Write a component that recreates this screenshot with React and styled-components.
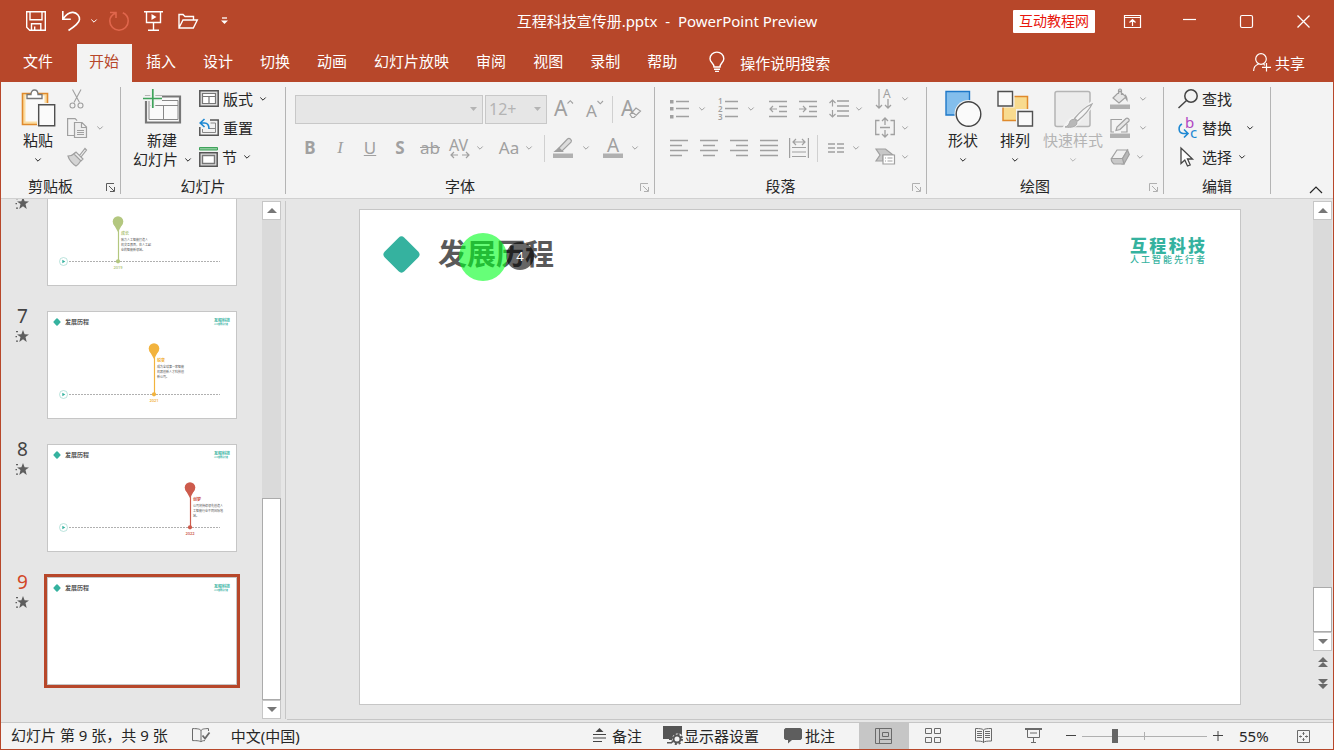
import React from 'react';
import styled, { createGlobalStyle, css } from 'styled-components';

const red = '#b7472a';
const ribbonBg = '#f3f3f3';
const line = '#c6c6c6';
const ink = '#262626';
const muted = '#a0a0a0';
const teal = '#35b29f';

const GlobalStyle = createGlobalStyle`
    * {
        box-sizing: border-box;
    }
    body {
        margin: 0;
        font-family: 'Noto Sans', 'Noto Sans CJK SC', sans-serif;
        font-size: 15px;
        color: ${ink};
    }
    button, select, input {
        font: inherit;
        color: inherit;
        margin: 0;
        padding: 0;
        border: 0;
        border-radius: 0;
        background: none;
    }
    svg {
        display: block;
        flex: none;
        overflow: visible;
    }
`;

/* ---------- layout ---------- */

const Window = styled.div`
    display: flex;
    flex-direction: column;
    height: 100vh;
    border: solid ${red};
    border-width: 0 1px 1px;
    background: #e6e6e6;
    overflow: hidden;
`;

const TitleBar = styled.header`
    display: grid;
    grid-template-columns: 1fr auto 1fr;
    align-items: center;
    height: 42px;
    background: ${red};
    color: #fff;
`;

const QuickAccess = styled.div`
    display: flex;
    align-items: center;
    padding-left: 25px;
`;

const QuickButton = styled.button`
    display: flex;
    align-items: center;
    gap: 10px;
    height: 24px;
    margin-right: ${p => p.$after}px;
    color: ${p => (p.disabled ? '#e0664c' : '#fff')};
`;

const DocTitle = styled.h1`
    margin: 0;
    padding-bottom: 2px;
    font-size: 15px;
    font-weight: 400;
    white-space: pre;
`;

const WindowControls = styled.div`
    display: flex;
    justify-content: flex-end;
    align-items: center;
    padding-right: 1px;
`;

const SiteBadge = styled.a`
    margin-right: 9px;
    padding: 0 6px 1px;
    border-radius: 1px;
    background: #fff;
    color: #e8160c;
    font-size: 14px;
    line-height: 22px;
    text-decoration: none;
`;

const ControlButton = styled.button`
    display: flex;
    justify-content: center;
    align-items: center;
    width: 57px;
    height: 40px;
`;

const TabBar = styled.nav`
    display: flex;
    gap: 2px;
    height: 40px;
    padding-top: 2px;
    background: ${red};
    color: #fff;
`;

const Tab = styled.button`
    padding: 0 13px 3px 12px;
    line-height: 35px;
    white-space: nowrap;
    ${p => p.$file && css`
        padding: 0 22px 3px;
    `}
    ${p => p.$active && css`
        background: ${ribbonBg};
        color: ${red};
    `}
`;

const TellMe = styled.button`
    display: flex;
    align-items: center;
    gap: 15px;
    margin-left: 17px;
    padding-bottom: 2px;
`;

const Share = styled(TellMe)`
    gap: 4px;
    margin-left: auto;
    padding-right: 28px;
`;

const Ribbon = styled.section`
    display: flex;
    flex: none;
    height: 117px;
    padding-top: 5px;
    border-bottom: 1px solid #d0d0d0;
    background: ${ribbonBg};
`;

const GroupBox = styled.div`
    display: flex;
    flex-direction: column;
    width: ${p => p.$width}px;
    height: 107px;
    border-right: 1px solid #b4b4b4;
`;

const GroupBody = styled.div`
    display: flex;
    flex: 1;
    padding-left: ${p => p.$left}px;
`;

const GroupFooter = styled.div`
    display: flex;
    align-items: center;
    height: 18px;
    margin-bottom: -1px;
`;

const GroupLabel = styled.span`
    flex: 1;
    text-align: center;
    line-height: 18px;
`;

const Launcher = styled.button`
    display: flex;
    width: 20px;
    padding: 2px 0 0 6px;
    color: ${p => (p.disabled ? '#b0b0b0' : '#5a5a5a')};
`;

const Collapse = styled.button`
    margin: auto 10px 4px auto;
`;

const BigButton = styled.button`
    display: flex;
    flex-direction: column;
    align-items: center;
    width: ${p => p.$width}px;
    height: 84px;
    padding-top: 2px;
    line-height: 19px;
    white-space: nowrap;
    color: ${p => (p.disabled ? '#b4b4b4' : ink)};
`;

const BigIcon = styled.span`
    height: 40px;
    margin-bottom: 2px;
`;

const BigLine = styled.span`
    display: flex;
    justify-content: center;
    align-items: center;
    gap: 7px;
    height: 19px;
`;

const Stack = styled.div`
    display: flex;
    flex-direction: column;
    gap: 4px;
    margin-top: -1px;
    padding-left: ${p => p.$left || 0}px;
`;

const SmallButton = styled.button`
    display: flex;
    align-items: center;
    height: 25px;
    color: ${p => (p.disabled ? muted : ink)};
`;

const SmallText = styled.span`
    margin: 0 ${p => p.$after || 7}px 0 4px;
`;

const ToolRows = styled.div`
    display: flex;
    flex-direction: column;
    gap: 9px;
    padding-top: 7px;
`;

const ToolRow = styled.div`
    display: flex;
    align-items: center;
    height: 30px;
`;

const ToolButton = styled.button`
    display: flex;
    align-items: center;
    height: 30px;
    margin-left: ${p => p.$left || 0}px;
    padding-bottom: 1px;
    color: ${muted};
`;

const ToolFace = styled.span`
    display: flex;
    justify-content: center;
    width: 30px;
    margin-right: ${p => p.$after || 0}px;
    font-size: 17px;
    line-height: 28px;
`;

const ToolDivider = styled.span`
    width: 1px;
    height: 27px;
    margin: 0 ${p => p.$after || 3}px 0 ${p => p.$before || 3}px;
    background: #d0d0d0;
`;

const SelectBox = styled.label`
    display: flex;
    align-items: center;
    position: relative;
    width: ${p => p.$width}px;
    height: 29px;
    margin-right: 2px;
    border: 1px solid #c8c8c8;
    background: #e6e6e6;
    color: #b4b4b4;

    select {
        width: 100%;
        height: 100%;
        padding-left: 3px;
        appearance: none;
        opacity: 1;
        font-size: 16px;
    }
    svg {
        position: absolute;
        right: 5px;
        pointer-events: none;
    }
`;

const Workspace = styled.main`
    display: flex;
    flex: 1;
    min-height: 0;
`;

const ThumbPane = styled.div`
    display: flex;
    flex-direction: column;
    justify-content: flex-end;
    gap: 25px;
    width: 261px;
    padding: 0 25px 37px 0;
    overflow: hidden;
`;

const ThumbRow = styled.div`
    display: flex;
    flex: none;
`;

const ThumbIndex = styled.div`
    display: flex;
    flex-direction: column;
    align-items: center;
    gap: 1px;
    width: 46px;
    padding-right: 3px;
    margin-top: -8px;
    font-size: 19px;
    line-height: 26px;
    color: ${p => (p.$active ? '#d24726' : '#444')};
`;

const Thumb = styled.button`
    position: relative;
    flex: 1;
    height: 108px;
    border: 1px solid ${line};
    background: #fff;
    text-align: left;
    ${p => p.$active && css`
        outline: 3px solid ${red};
    `}

    > svg {
        position: absolute;
        inset: 0;
    }
`;

const ThumbHead = styled.span`
    display: flex;
    align-items: center;
    position: absolute;
    inset: 4px 6px auto 5px;
    height: 12px;
    font-size: 6px;
    font-weight: 700;
    color: #555;
`;

const ThumbTitle = styled.span`
    margin-left: 4px;
    font-size: 6px;
    line-height: 12px;
`;

const ThumbLogo = styled.span`
    display: flex;
    flex-direction: column;
    width: 16px;
    margin-left: auto;
    font-size: 4px;
    line-height: 5px;
    color: ${teal};

    small {
        font-size: 2px;
        line-height: 4px;
    }
`;

const ScrollBar = styled.div`
    display: flex;
    flex-direction: column;
    flex: 1;
    width: 19px;
    background: #dadada;
`;

const ScrollColumn = styled.div`
    display: flex;
    flex-direction: column;
    padding: ${p => p.$pad};
`;

const ScrollButton = styled.button`
    display: flex;
    justify-content: center;
    align-items: center;
    height: 19px;
    border: 1px solid ${line};
    background: #fff;
    color: #777;
`;

const ScrollThumb = styled.div`
    height: ${p => p.$size}%;
    margin-top: auto;
    border: 1px solid #ababab;
    background: #fff;
`;

const SlideJump = styled.button`
    display: flex;
    justify-content: center;
    height: 22px;
    padding-top: 6px;
    color: #6a6a6a;
`;

const PaneDivider = styled.div`
    width: 1px;
    margin: 2px 1px 3px 4px;
    background: ${line};
`;

const Stage = styled.div`
    flex: 1;
    display: flex;
    flex-direction: column;
    min-width: 0;
    margin-bottom: 2px;
    border-bottom: 1px solid ${line};
`;

const StageInner = styled.div`
    display: flex;
    flex: 1;
    min-height: 0;
`;

const SlideArea = styled.div`
    flex: 1;
    padding: 10px 72px;
`;

const Slide = styled.article`
    display: flex;
    justify-content: space-between;
    align-items: flex-start;
    width: 100%;
    aspect-ratio: 16 / 9;
    padding: 24px 35px 0 22px;
    border: 1px solid ${line};
    background: #fff;
`;

const SlideHeading = styled.div`
    display: flex;
    align-items: center;
    gap: 17px;
    position: relative;
`;

const SlideTitle = styled.h2`
    margin: 0;
    font-size: 29px;
    font-weight: 700;
    line-height: 40px;
    color: #595959;
`;

const Pointer = styled.span`
    position: absolute;
    top: -1px;
    left: 77px;
    width: 48px;
    height: 48px;
    border-radius: 50%;
    background: rgba(0, 255, 30, 0.6);
`;

const StepBadge = styled.span`
    position: absolute;
    top: 8px;
    left: 124px;
    width: 28px;
    height: 28px;
    border-radius: 50%;
    background: rgba(0, 0, 0, 0.6);
    color: #fff;
    font-size: 13px;
    line-height: 28px;
    text-align: center;
`;

const Brand = styled.div`
    width: 75px;
    margin-top: 3px;
    color: ${teal};
    font-size: 17px;
    font-weight: 900;
    line-height: 18px;
    text-align: justify;
    text-align-last: justify;
`;

const Tagline = styled.div`
    font-size: 9px;
    font-weight: 500;
    line-height: 10px;
`;

const StatusBar = styled.footer`
    display: flex;
    align-items: stretch;
    flex: none;
    height: 27px;
    border-top: 1px solid ${line};
    background: ${ribbonBg};
`;

const StatusText = styled.span`
    padding-left: 10px;
    line-height: 25px;
    white-space: nowrap;
`;

const StatusButton = styled.button`
    display: flex;
    align-items: center;
    gap: ${p => p.$gap || 0}px;
    margin-left: ${p => p.$left || 0}px;
    padding-bottom: 2px;
    white-space: nowrap;
`;

const StatusRight = styled.div`
    display: flex;
    align-items: stretch;
    margin-left: auto;
    padding-right: 23px;
`;

const ViewButtons = styled.div`
    display: flex;
    margin-left: 24px;
`;

const ViewButton = styled.button`
    display: flex;
    justify-content: center;
    align-items: center;
    width: 50px;
    color: #6a6a6a;
    background: ${p => (p.$active ? line : 'none')};
`;

const ZoomRange = styled.input`
    align-self: center;
    width: 125px;
    height: 16px;
    margin: 0 6px;
    appearance: none;
    background:
        linear-gradient(#b0b0b0, #b0b0b0) 50% 50% / 100% 1px no-repeat,
        linear-gradient(#b0b0b0, #b0b0b0) 50% 50% / 1px 8px no-repeat;

    &::-webkit-slider-thumb {
        appearance: none;
        width: 6px;
        height: 14px;
        background: #666;
    }
`;

const ZoomValue = styled.button`
    width: 60px;
    padding: 0 0 1px 16px;
    text-align: left;
`;

const PlainButton = styled.button`
    display: flex;
    align-items: center;
    margin-left: ${p => p.$left || 0}px;
`;

/* ---------- icons ---------- */

const Svg = ({ w = 20, h = 20, sw = 1, children, ...rest }) => (
    <svg
        width={w}
        height={h}
        viewBox={`0 0 ${w} ${h}`}
        fill="none"
        stroke="currentColor"
        strokeWidth={sw}
        aria-hidden="true"
        {...rest}
    >
        {children}
    </svg>
);

const Chevron = props => (
    <Svg w={6} h={4} sw={1} {...props}><path d="M.3 .5 3 3.2 5.7 .5" /></Svg>
);

const Triangle = ({ up }) => (
    <Svg w={10} h={5} stroke="none" fill="currentColor">
        <path d={up ? 'M5 0 10 5H0z' : 'M0 0h10L5 5z'} />
    </Svg>
);

const LauncherIcon = () => (
    <Svg w={9} h={9}>
        <path d="M.5 8V.5H8M3 3l5 5M8.5 4v4.5H4" />
    </Svg>
);

const SaveIcon = () => (
    <Svg sw={1.4}>
        <path d="M.7 .7h18.6v18.6H3.7l-3-3zM4 .7v8h12v-8M5.5 19v-6.3h9.3V19M8.7 19v-3.5" />
    </Svg>
);

const UndoIcon = () => (
    <Svg sw={1.6}>
        <path d="M1.8 0v8.3h8M2 8C5.500 3 8.500 1 12 1.400c4 .5 6.700 3.500 6.500 7.100C18.300 12 14 15 7.500 19.500" />
    </Svg>
);

const RedoIcon = () => (
    <Svg sw={1.6}>
        <path d="M1 1.500h6V7M7 2C3 3.500 .8 6.500 .8 10a9.200 9.200 0 0 0 18.400 0c0-3.600-2-6.600-5.400-8.200" />
    </Svg>
);

const PresentIcon = () => (
    <Svg w={19} sw={1.4}>
        <path d="M0 .7h19M2.500 1v10.500h14V1M9.500 12v7M4 19.200h11" />
        <path d="M7.500 3v6l5-3z" fill="currentColor" stroke="none" />
    </Svg>
);

const FolderIcon = () => (
    <Svg h={16} sw={1.4}>
        <path d="M1 14.500V1.500h4l2 2h8.500v3.300M1 14.800 5 7h14.300l-4 8H1z" />
    </Svg>
);

const CustomizeIcon = () => (
    <Svg w={7} h={8} sw={1.300}>
        <path d="M1 1h5" />
        <path d="M0 3.500h7L3.500 7z" fill="currentColor" stroke="none" />
    </Svg>
);

const DisplayIcon = () => (
    <Svg w={17} h={13} sw={1.200}>
        <path d="M.5 .5h16v12H.5zM.5 2.500h16M8.500 11V5M5.500 7.500l3-3 3 3" />
    </Svg>
);

const BulbIcon = () => (
    <Svg w={16} sw={1.4}>
        <path d="M5 15c0-4-4-4.500-4-8.300a6.800 6.500 0 0 1 13.800 0C14.800 10.500 11 11 11 15zM5 17.300h6M6 19.400h4" />
    </Svg>
);

const ShareIcon = () => (
    <Svg w={18} h={19} sw={1.200}>
        <circle cx="8" cy="6" r="5.300" />
        <path d="M.6 18c0-4 2-6 5-7M10.500 11.200l1.500 1M13.500 10v8.500M9 14.300h9" />
    </Svg>
);

const PasteIcon = () => (
    <Svg w={34} h={38}>
        <path d="M1.500 4.500h25v31h-25z" fill="#fbdca0" stroke="#e08a2c" strokeWidth="1.600" />
        <path d="M4.500 6.500h19v26h-19z" fill="#fafafa" stroke="none" />
        <path d="M6 9.500v-4h4c0-3 1.500-4.500 3.500-4.500S17 2.500 17 5.500h4v4z" fill="#fff" stroke="#777" strokeWidth="1.300" />
        <path d="M16 14h17v22H16z" fill={ribbonBg} stroke="none" />
        <path d="M17.700 15.700h16v21h-16z" fill="#fafafa" stroke="#505050" strokeWidth="1.400" />
    </Svg>
);

const CutIcon = () => (
    <Svg w={20} sw={1.100}>
        <path d="M5.500 .5 12.500 13.500M14 .5 7 13.500" />
        <circle cx="5.500" cy="16.500" r="2.500" />
        <circle cx="13.500" cy="16.500" r="2.500" />
    </Svg>
);

const CopyIcon = () => (
    <Svg sw={1.200}>
        <path d="M7 17.500H.6V.6h7.500l2 2" />
        <path d="M7.500 4.500h7.500l4.500 4.500v10.500h-12zM14.500 4.500v5h5M10 12.500h7M10 14.500h7M10 16.500h7" fill="#eee" />
    </Svg>
);

const PainterIcon = () => (
    <Svg sw={1.200}>
        <path d="M1 9c3 0 5-1 7-3l6.500 6.500C13 15 11 18 9 19 6 17.500 2 13 1 9z" fill="#d4d4d4" />
        <path d="M7 7l7 7 2-2-7-7zM12.500 8.500 18 1.500l1.500 1.500-5.500 7" fill="#eee" />
    </Svg>
);

const NewSlideIcon = () => (
    <Svg w={38} h={35}>
        <path d="M3 7.500h34v26H3z" fill="#fafafa" stroke="#777" strokeWidth="2.200" />
        <path d="M7 16.500h28M20.500 16.500V31M6 11.500h29v19H6z" stroke="#888" />
        <path d="M9.800 0v18.500M0 9.500h19" stroke={ribbonBg} strokeWidth="5" />
        <path d="M9.800 0v19M0 9.500h19" stroke="#3fa35b" strokeWidth="1.700" />
    </Svg>
);

const LayoutIcon = () => (
    <Svg h={17}>
        <path d="M.8 .8h18.400v15.400H.8z" fill="#dcdcdc" stroke="#555" strokeWidth="1.500" />
        <path d="M3.500 3.500h13v10h-13zM3.500 6.500h13M10 6.500v7" fill="#fff" stroke="#777" strokeWidth="1.200" />
    </Svg>
);

const ResetIcon = () => (
    <Svg h={17}>
        <path d="M.8 8v8.200h18.400V1H11" stroke="#555" strokeWidth="1.500" />
        <path d="M3.500 10v3.500h13V4h-5M10 9.500h6" stroke="#888" />
        <path d="M5.500 0 1.200 4l4.300 4M1.500 4h4c3.500 0 4.500 2 4.500 6" stroke="#1e88d2" strokeWidth="1.600" />
    </Svg>
);

const SectionIcon = () => (
    <Svg w={19}>
        <path d="M.5 .5h18v2.500H.5z" fill="#8ccb9b" stroke="#3fa35b" />
        <path d="M.8 5.800h17.400v13.400H.8z" fill="#ddd" stroke="#555" strokeWidth="1.500" />
        <path d="M3.500 8.500h12v8h-12z" fill="#fff" stroke="#777" strokeWidth="1.400" />
    </Svg>
);

const GrowFontIcon = ({ small }) => (
    <Svg w={20} sw={1.100}>
        <text x="0" y={small ? 18 : 17} fontSize={small ? 17 : 21} fill="currentColor" stroke="none">A</text>
        <path d={small ? 'M11.500 2l2.800 2.800L17 2' : 'M13.500 4.500l2.800-2.800L19 4.500'} />
    </Svg>
);

const ClearFormatIcon = () => (
    <Svg sw={1.200}>
        <text x="0" y="17" fontSize="21" fill="currentColor" stroke="none">A</text>
        <path d="M9 15.500 15 9l4.500 3-6.500 6.500h-2zM11 13l4.500 3.500" fill={ribbonBg} />
    </Svg>
);

const SpacingIcon = () => (
    <Svg w={20} sw={1.200}>
        <text x="-1" y="13" fontSize="16" fill="currentColor" stroke="none">AV</text>
        <path d="M1 17h7M4 14l-3 3 3 3M12 17h7M16 14l3 3-3 3" />
    </Svg>
);

const HighlightIcon = () => (
    <Svg sw={1.200}>
        <path d="M5 11 14.500 1c2-1.500 5 1 3.500 3.200L9 13H5z" fill="#ddd" />
        <path d="M2 13.500 6 10l3.500 3.500z" fill="currentColor" />
        <path d="M0 15.500h20v4.500H0z" fill="#b0b0b0" stroke="none" />
    </Svg>
);

const FontColorIcon = () => (
    <Svg>
        <text x="4" y="14" fontSize="19" fill="currentColor" stroke="none">A</text>
        <path d="M0 15.500h20v4.500H0z" fill="#b0b0b0" stroke="none" />
    </Svg>
);

const BulletsIcon = () => (
    <Svg w={19} sw={1.600}>
        <path d="M6 2.500h13M6 9.500h13M6 17.500h13" />
        <path d="M0 1h3.500v3.500H0zM0 8h3.500v3.500H0zM0 16h3.500v3.500H0z" fill="currentColor" stroke="none" />
    </Svg>
);

const NumberingIcon = () => (
    <Svg w={20} sw={1.600}>
        <path d="M7 2.500h13M7 9.500h13M7 17.500h13" />
        <g fill="currentColor" stroke="none" fontSize="8" fontWeight="600">
            <text x="0" y="5">1</text>
            <text x="0" y="13">2</text>
            <text x="0" y="21">3</text>
        </g>
    </Svg>
);

const IndentIcon = ({ out }) => (
    <Svg w={18} h={18} sw={1.600}>
        <path d="M0 1.500h18M10 6.500h8M10 11.500h8M0 16.500h18" />
        <path d={out ? 'M1 9h7M4 6 1 9l3 3' : 'M0 9h7M4 6l3 3-3 3'} strokeWidth="1.200" />
    </Svg>
);

const LineSpacingIcon = () => (
    <Svg w={20} h={19} sw={1.600}>
        <path d="M8 2h12M8 7h12M8 12h12M8 17h12" />
        <path d="M3.500 1v6.500M3.500 11v7M.5 4l3-3 3 3M.5 15l3 3 3-3" strokeWidth="1.200" />
    </Svg>
);

const alignPaths = {
    left: 'M0 1.500h18M0 6.500h12M0 11.500h18M0 16.500h12',
    center: 'M0 1.500h18M3 6.500h12M0 11.500h18M3 16.500h12',
    right: 'M0 1.500h18M6 6.500h12M0 11.500h18M6 16.500h12',
    justify: 'M0 1.500h18M0 6.500h18M0 11.500h18M0 16.500h18',
};

const AlignIcon = ({ kind }) => (
    <Svg w={18} h={18} sw={1.500}><path d={alignPaths[kind]} /></Svg>
);

const DistributeIcon = () => (
    <Svg w={20} h={20} sw={1.200}>
        <path d="M.6 0v20M19.400 0v20M4 4h12M7 1 4 4l3 3M13 1l3 3-3 3M3 9.500h14M3 14h14M3 18.500h14" />
    </Svg>
);

const ColumnsIcon = () => (
    <Svg w={16} h={10} sw={1.300}>
        <path d="M0 1h7M0 5h7M0 9h7M9 1h7M9 5h7M9 9h7" />
    </Svg>
);

const TextDirectionIcon = () => (
    <Svg sw={1.300}>
        <path d="M4 0v19M1 16l3 3 3-3M13 10v9M10 16l3 3 3-3" />
        <text x="8" y="9" fontSize="12" fill="currentColor" stroke="none">A</text>
    </Svg>
);

const AlignTextIcon = () => (
    <Svg sw={1.300}>
        <path d="M4.500 2.500H.7v14h3.800M15.500 2.500h3.800v14h-3.800M5 9.500h10M10 0v7M7 3l3-3 3 3M10 12v7M7 16l3 3 3-3" />
    </Svg>
);

const SmartArtIcon = () => (
    <Svg h={17} sw={1.200}>
        <path d="M1 1h9.500L18 7H8v6H1l4-6z" fill="#c8c8c8" />
        <path d="M8 7h11.500v9H8z" fill="#fff" />
        <path d="M10 10h1M10 13h1M12.500 10h5M12.500 13h5" />
    </Svg>
);

const ShapesIcon = () => (
    <Svg w={36} h={37}>
        <path d="M1 2.500h23.500V26H1z" fill="#83beec" stroke="#1e78c8" strokeWidth="1.400" />
        <circle cx="23.500" cy="25" r="14" fill={ribbonBg} stroke="none" />
        <circle cx="23.500" cy="25" r="12.300" fill="#fafafa" stroke="#444" strokeWidth="1.400" />
    </Svg>
);

const ArrangeIcon = () => (
    <Svg w={36} h={37}>
        <path d="M6 7.500h24.500v24H6z" fill="#f8db8f" stroke="#e08a2c" strokeWidth="1.500" />
        <path d="M0 1h17.500v17.500H0zM19 20h17.500v18H19z" fill={ribbonBg} stroke="none" />
        <path d="M1 2.500h14.500V17H1zM21 22.500h14.500V37H21z" fill="#fafafa" stroke="#505050" strokeWidth="1.400" />
    </Svg>
);

const QuickStylesIcon = () => (
    <Svg w={38} h={38}>
        <rect x="1" y="2.500" width="35" height="35" rx="2" fill="#ececec" stroke="#b4b4b4" strokeWidth="1.500" />
        <path d="M11 38.500c6 0 10-1 12-5L38 16l-1-1-17 15c-4 0-5 3-9 8.500z" fill={ribbonBg} stroke={ribbonBg} strokeWidth="4" />
        <path d="M11 38c2-.5 4-2 4.500-4.500s3-3.500 5-3 3 3 2 5-5 3.500-11.500 2.500z" fill="#b8b8b8" stroke="#a8a8a8" />
        <path d="M20.500 29.500C25 24 32 17.500 38 15 35.500 20.500 29 27.500 23.500 32z" fill="#f4f4f4" stroke="#a8a8a8" strokeWidth="1.200" />
    </Svg>
);

const FillIcon = () => (
    <Svg sw={1.200}>
        <path d="M3 9 10 2l6 6-7 6zM8.500 5V1.500c0-2 3-2 3 0V6" fill="#e6e6e6" />
        <path d="M15 5c2 2 3 4 2.500 8L15 9z" fill="currentColor" stroke="none" />
        <path d="M0 15.500h20v4.500H0z" fill="#b0b0b0" stroke="none" />
    </Svg>
);

const OutlineIcon = () => (
    <Svg sw={1.200}>
        <path d="M12 1.500H1v12.500h3M17 6v8h-6" />
        <path d="M6 12.500 7 9l9-8.500c1.500-1 4 1 3 2.500l-9 8.500z" fill="#e6e6e6" />
        <path d="M0 15.500h20v4.500H0z" fill="#b0b0b0" stroke="none" />
    </Svg>
);

const EffectsIcon = () => (
    <Svg h={16} sw={1.200}>
        <path d="M7 1h10.500l-5 8.500H1.500z" fill="#f0f0f0" />
        <path d="M12.500 9.500l5-8.500L19.300 5.500 14 15H12z" fill="#b8b8b8" />
        <path d="M1.500 9.500h11L14 15H4C2.500 14 .5 11 1.500 9.500z" fill="#c8c8c8" />
    </Svg>
);

const FindIcon = () => (
    <Svg sw={1.500} color="#444">
        <circle cx="13" cy="7" r="6.200" />
        <path d="M8.500 11.500.5 19" />
    </Svg>
);

const ReplaceIcon = () => (
    <Svg sw={1.600}>
        <g stroke="none" fontSize="15">
            <text x="7" y="10" fill="#b146c2">b</text>
            <text x="12" y="20" fill="#1e88d2">c</text>
        </g>
        <path d="M4 6C0 8 0 15 5 15.500h4M6 11.500l4 4-4 4" stroke="#1e88d2" />
    </Svg>
);

const SelectIcon = () => (
    <Svg w={20} h={20} sw={1.300} color="#444">
        <path d="M3 1v15.500l3.800-3.500 2.700 6 2.700-1.200-2.700-5.800h5z" fill="#fff" />
    </Svg>
);

const StarIcon = () => (
    <Svg w={12} h={12} stroke="none" fill="#5e5e5e">
        <path d="m6 0 1.600 4.200 4.400.2-3.500 2.700L9.700 12 6 9.300 2.300 12l1.200-4.900L0 4.400l4.400-.2z" />
        <path d="M-1 1h2v1.200h-2zM-1.500 6H0v1.200h-1.500zM-1 10.500h2v1.200h-2z" />
    </Svg>
);

const Diamond = ({ size }) => (
    <Svg w={size} h={size} viewBox="0 0 38 38" stroke="none" fill={teal}>
        <rect x="5.500" y="5.500" width="27" height="27" rx="4" transform="rotate(45 19 19)" />
    </Svg>
);

const SpellIcon = () => (
    <Svg w={18} h={15} color="#6a6a6a">
        <path d="M9 14V2.500C8 1 6 .6.5.6v12c5 0 7.500.2 8.500 1.400M9 2.500C10 1 12 .6 16.500.6V3M9 14c.8-1 2-1.400 4-1.400" />
        <path d="m10.500 7.500 2.500 3 4.500-6" strokeWidth="1.800" />
    </Svg>
);

const NotesIcon = () => (
    <Svg w={13} h={14} color="#444">
        <path d="M0 6.500h13M0 10h13M0 13.500h9" />
        <path d="M6.500 0 10.500 4h-8z" fill="currentColor" stroke="none" />
    </Svg>
);

const DisplaySettingsIcon = () => (
    <Svg w={20} h={18} stroke="none" fill="#555">
        <path d="M0 0h19v9a6 6 0 0 0-10 5H6v-1H0zM4 16h5v1.500H4z" />
        <circle cx="14" cy="13" r="3.500" fill="none" stroke="#555" strokeWidth="2" />
        <circle cx="14" cy="13" r="5" fill="none" stroke="#555" strokeWidth="2" strokeDasharray="2 1.930" />
    </Svg>
);

const CommentIcon = () => (
    <Svg w={18} h={15} stroke="none" fill="#5e5e5e">
        <path d="M1.500 0h15L18 1.500v9L16.500 12H8l-4 3.500V12H1.500L0 10.500v-9z" />
    </Svg>
);

const NormalViewIcon = () => (
    <Svg w={18} h={16}>
        <path d="M.5 .5h16v15H.5zM4.500 .5v15M4.500 11.500h12M7.500 4.500h6v4h-6z" />
    </Svg>
);

const SorterIcon = () => (
    <Svg w={18} h={16}>
        <path d="M.5 .5h6v5h-6zM9.500 .5h6v5h-6zM.5 9.500h6v5h-6zM9.500 9.500h6v5h-6z" />
    </Svg>
);

const ReadingIcon = () => (
    <Svg w={18} h={16}>
        <path d="M8.500 15V2C7.500.8 5 .5.5.5v12.500c4 0 7 .3 8 1.300 1-1 4-1.300 8-1.300V.5C12 .5 9.500.8 8.500 2M2 3.500h5M2 5.500h5M2 7.500h5M2 9.500h5M10 3.500h5M10 5.500h5M10 7.500h5M10 9.500h5" />
    </Svg>
);

const SlideShowIcon = () => (
    <Svg w={18} h={16}>
        <path d="M0 1h17" strokeWidth="2" />
        <path d="M2.500 2v7.500h12V2M5 5h7M8.500 9.500v5M6 14.500h5" />
    </Svg>
);

const FitIcon = () => (
    <Svg w={13} h={13} color="#6a6a6a">
        <path d="M.5 .5h12v12H.5zM6.500 2v3M6.500 8v3M2 6.500h3M8 6.500h3M5.500 3.500l1-1 1 1M5.500 9.500l1 1 1-1M3.500 5.500l-1 1 1 1M9.500 5.500l1 1-1 1" />
    </Svg>
);

/* ---------- parts ---------- */

const Group = ({ label, width, left, launcher, launcherOff, children }) => (
    <GroupBox $width={width}>
        <GroupBody $left={left}>{children}</GroupBody>
        <GroupFooter>
            <GroupLabel>{label}</GroupLabel>
            {launcher && (
                <Launcher disabled={launcherOff} aria-label={`${label}设置`}>
                    <LauncherIcon />
                </Launcher>
            )}
        </GroupFooter>
    </GroupBox>
);

const Tool = ({ label, left, drop, children }) => (
    <ToolButton $left={left} aria-label={label} disabled>
        <ToolFace $after={drop}>{children}</ToolFace>
        {drop !== undefined && <Chevron />}
    </ToolButton>
);

const DropGap = styled.span`
    width: ${p => p.$width}px;
`;

const IconDrop = ({ label, gap = 7, children }) => (
    <SmallButton aria-label={label} disabled>
        {children}
        <DropGap $width={gap} />
        <Chevron />
    </SmallButton>
);

const Italic = styled.i`
    font-family: 'Liberation Serif', serif;
`;

const slides = [
    { no: 6, x: 70, y: 43, color: '#b3c77f', head: '成长', year: '2019', text: ['致力人工智能打造人', '机交互界面，在人工AI', '业的智能新领域。'] },
    { no: 7, x: 106, y: 37, color: '#f2b33d', head: '蜕变', year: '2021', text: ['成为全球第一家智能', '机器创新人才科技创', '新公司。'] },
    { no: 8, x: 142, y: 43, color: '#cd5b4c', head: '创梦', year: '2022', text: ['公司将持续领先创造人', '工智能行业不同国际地', '域。'] },
    { no: 9 },
];

const Timeline = ({ slide }) => (
    <Svg w={188} h={106} stroke="none">
        <circle cx="15.500" cy="82.500" r="4" stroke="#9fd8cf" strokeWidth=".7" />
        <path d="M14.300 80.800v3.400l3-1.700z" fill={teal} />
        <path d="M21 82.500h151" stroke="#b0b0b0" strokeDasharray="2 1" />
        <path d={`M${slide.x + 0.5} ${slide.y}V82`} stroke={slide.color} strokeWidth="1.200" />
        <circle cx={slide.x} cy={slide.y - 0.5} r="5.300" fill={slide.color} />
        <path d={`M${slide.x - 4.5} ${slide.y + 2}h9L${slide.x} ${slide.y + 10}z`} fill={slide.color} />
        <circle cx={slide.x} cy="82.300" r="2.100" fill={slide.color} />
        <text x={slide.x} y="90" fontSize="4" fontWeight="600" textAnchor="middle" fill={slide.color}>{slide.year}</text>
        <text x={slide.x + 3} y={slide.y + 13} fontSize="4" fontWeight="700" fill={slide.color}>{slide.head}</text>
        {slide.text.map((row, i) => (
            <text key={row} x={slide.x + 3} y={slide.y + 19 + i * 5} fontSize="3" fill="#555">{row}</text>
        ))}
    </Svg>
);

const SlideThumb = ({ slide, active }) => (
    <ThumbRow>
        <ThumbIndex $active={active}>
            {slide.no}
            <StarIcon />
        </ThumbIndex>
        <Thumb $active={active} aria-label={`幻灯片 ${slide.no}`}>
            <ThumbHead>
                <Diamond size={8} />
                <ThumbTitle>发展历程</ThumbTitle>
                <ThumbLogo>
                    互程科技
                    <small>人工智能先行者</small>
                </ThumbLogo>
            </ThumbHead>
            {slide.year && <Timeline slide={slide} />}
        </Thumb>
    </ThumbRow>
);

const tabs = ['文件', '开始', '插入', '设计', '切换', '动画', '幻灯片放映', '审阅', '视图', '录制', '帮助'];

const App = () => (
    <Window lang="zh-CN">
        <GlobalStyle />
        <TitleBar>
            <QuickAccess>
                <QuickButton $after={15} aria-label="保存"><SaveIcon /></QuickButton>
                <QuickButton $after={12} aria-label="撤消"><UndoIcon /><Chevron /></QuickButton>
                <QuickButton $after={15} aria-label="重复" disabled><RedoIcon /></QuickButton>
                <QuickButton $after={15} aria-label="从头开始"><PresentIcon /></QuickButton>
                <QuickButton $after={23} aria-label="打开"><FolderIcon /></QuickButton>
                <QuickButton $after={0} aria-label="自定义"><CustomizeIcon /></QuickButton>
            </QuickAccess>
            <DocTitle>互程科技宣传册.pptx  -  PowerPoint Preview</DocTitle>
            <WindowControls>
                <SiteBadge href="#">互动教程网</SiteBadge>
                <ControlButton aria-label="功能区显示选项"><DisplayIcon /></ControlButton>
                <ControlButton aria-label="最小化">
                    <Svg w={13} h={12} sw={1.200}><path d="M0 4.500h13" /></Svg>
                </ControlButton>
                <ControlButton aria-label="最大化">
                    <Svg w={13} h={13} sw={1.200}><rect x=".5" y=".5" width="12" height="12" rx="1.500" /></Svg>
                </ControlButton>
                <ControlButton aria-label="关闭">
                    <Svg w={13} h={13} sw={1.300}><path d="M.5 .5l12 12M12.500 .5l-12 12" /></Svg>
                </ControlButton>
            </WindowControls>
        </TitleBar>

        <TabBar>
            {tabs.map(name => (
                <Tab key={name} $file={name === '文件'} $active={name === '开始'}>{name}</Tab>
            ))}
            <TellMe><BulbIcon />操作说明搜索</TellMe>
            <Share><ShareIcon />共享</Share>
        </TabBar>

        <Ribbon>
            <Group label="剪贴板" width={120} left={14} launcher>
                <BigButton $width={46}>
                    <BigIcon><PasteIcon /></BigIcon>
                    <BigLine>粘贴</BigLine>
                    <BigLine><Chevron /></BigLine>
                </BigButton>
                <Stack $left={6}>
                    <SmallButton aria-label="剪切" disabled><CutIcon /></SmallButton>
                    <IconDrop label="复制" gap={10}><CopyIcon /></IconDrop>
                    <SmallButton aria-label="格式刷" disabled><PainterIcon /></SmallButton>
                </Stack>
            </Group>

            <Group label="幻灯片" width={165} left={8}>
                <BigButton $width={66}>
                    <BigIcon><NewSlideIcon /></BigIcon>
                    <BigLine>新建</BigLine>
                    <BigLine>幻灯片<Chevron /></BigLine>
                </BigButton>
                <Stack $left={4}>
                    <SmallButton><LayoutIcon /><SmallText>版式</SmallText><Chevron /></SmallButton>
                    <SmallButton><ResetIcon /><SmallText>重置</SmallText></SmallButton>
                    <SmallButton><SectionIcon /><SmallText>节</SmallText><Chevron /></SmallButton>
                </Stack>
            </Group>

            <Group label="字体" width={369} left={9} launcher launcherOff>
                <ToolRows>
                    <ToolRow>
                        <SelectBox $width={188}>
                            <select aria-label="字体" disabled><option> </option></select>
                            <Svg w={7} h={4} stroke="none" fill="#b4b4b4"><path d="M0 0h7L3.500 4z" /></Svg>
                        </SelectBox>
                        <SelectBox $width={62}>
                            <select aria-label="字号" disabled><option>12+</option></select>
                            <Svg w={7} h={4} stroke="none" fill="#b4b4b4"><path d="M0 0h7L3.500 4z" /></Svg>
                        </SelectBox>
                        <Tool label="增大字号"><GrowFontIcon /></Tool>
                        <Tool label="减小字号" left={2}><GrowFontIcon small /></Tool>
                        <ToolDivider $before={1} $after={3} />
                        <Tool label="清除格式"><ClearFormatIcon /></Tool>
                    </ToolRow>
                    <ToolRow>
                        <Tool label="加粗"><b>B</b></Tool>
                        <Tool label="倾斜"><Italic>I</Italic></Tool>
                        <Tool label="下划线"><u>U</u></Tool>
                        <Tool label="文字阴影"><b>S</b></Tool>
                        <Tool label="删除线"><s>ab</s></Tool>
                        <Tool label="字符间距" drop={2}><SpacingIcon /></Tool>
                        <Tool label="更改大小写" left={11} drop={2}>Aa</Tool>
                        <ToolDivider $before={12} $after={3} />
                        <Tool label="突出显示" drop={5}><HighlightIcon /></Tool>
                        <Tool label="字体颜色" left={9} drop={4}><FontColorIcon /></Tool>
                    </ToolRow>
                </ToolRows>
            </Group>

            <Group label="段落" width={272} left={9} launcher launcherOff>
                <ToolRows>
                    <ToolRow>
                        <Tool label="项目符号" drop={5}><BulletsIcon /></Tool>
                        <Tool label="编号" left={8} drop={5}><NumberingIcon /></Tool>
                        <Tool label="降低级别" left={9}><IndentIcon out /></Tool>
                        <Tool label="提高级别"><IndentIcon /></Tool>
                        <Tool label="行距" left={1} drop={2}><LineSpacingIcon /></Tool>
                    </ToolRow>
                    <ToolRow>
                        <Tool label="左对齐"><AlignIcon kind="left" /></Tool>
                        <Tool label="居中"><AlignIcon kind="center" /></Tool>
                        <Tool label="右对齐"><AlignIcon kind="right" /></Tool>
                        <Tool label="两端对齐"><AlignIcon kind="justify" /></Tool>
                        <Tool label="分散对齐"><DistributeIcon /></Tool>
                        <ToolDivider />
                        <Tool label="分栏" drop={2}><ColumnsIcon /></Tool>
                    </ToolRow>
                </ToolRows>
                <Stack $left={13}>
                    <IconDrop label="文字方向"><TextDirectionIcon /></IconDrop>
                    <IconDrop label="对齐文本"><AlignTextIcon /></IconDrop>
                    <IconDrop label="转换为 SmartArt"><SmartArtIcon /></IconDrop>
                </Stack>
            </Group>

            <Group label="绘图" width={237} left={10} launcher launcherOff>
                <BigButton $width={52}>
                    <BigIcon><ShapesIcon /></BigIcon>
                    <BigLine>形状</BigLine>
                    <BigLine><Chevron /></BigLine>
                </BigButton>
                <BigButton $width={52}>
                    <BigIcon><ArrangeIcon /></BigIcon>
                    <BigLine>排列</BigLine>
                    <BigLine><Chevron /></BigLine>
                </BigButton>
                <BigButton $width={64} disabled>
                    <BigIcon><QuickStylesIcon /></BigIcon>
                    <BigLine>快速样式</BigLine>
                    <BigLine><Chevron /></BigLine>
                </BigButton>
                <Stack $left={5}>
                    <IconDrop label="形状填充" gap={10}><FillIcon /></IconDrop>
                    <IconDrop label="形状轮廓" gap={10}><OutlineIcon /></IconDrop>
                    <IconDrop label="形状效果" gap={7}><EffectsIcon /></IconDrop>
                </Stack>
            </Group>

            <Group label="编辑" width={107} left={14}>
                <Stack>
                    <SmallButton><FindIcon /><SmallText>查找</SmallText></SmallButton>
                    <SmallButton><ReplaceIcon /><SmallText $after={15}>替换</SmallText><Chevron /></SmallButton>
                    <SmallButton><SelectIcon /><SmallText>选择</SmallText><Chevron /></SmallButton>
                </Stack>
            </Group>
            <Collapse aria-label="折叠功能区">
                <Svg w={14} h={8} sw={1.200}><path d="M1 7l6-6 6 6" /></Svg>
            </Collapse>
        </Ribbon>

        <Workspace>
            <ThumbPane>
                {slides.map(s => <SlideThumb key={s.no} slide={s} active={s.no === 9} />)}
            </ThumbPane>
            <ScrollColumn $pad="2px 0 3px">
                <ScrollButton aria-label="向上滚动"><Triangle up /></ScrollButton>
                <ScrollBar><ScrollThumb $size={42} /></ScrollBar>
                <ScrollButton aria-label="向下滚动"><Triangle /></ScrollButton>
            </ScrollColumn>
            <PaneDivider />
            <Stage>
                <StageInner>
                    <SlideArea>
                        <Slide>
                            <SlideHeading>
                                <Diamond size={39} />
                                <SlideTitle>发展历程</SlideTitle>
                                <StepBadge>4</StepBadge>
                                <Pointer />
                            </SlideHeading>
                            <Brand>
                                互程科技
                                <Tagline>人工智能先行者</Tagline>
                            </Brand>
                        </Slide>
                    </SlideArea>
                    <ScrollColumn $pad="2px 1px 24px 0">
                        <ScrollButton aria-label="上滚"><Triangle up /></ScrollButton>
                        <ScrollBar><ScrollThumb $size={11} /></ScrollBar>
                        <ScrollButton aria-label="下滚"><Triangle /></ScrollButton>
                        <SlideJump aria-label="上一张幻灯片">
                            <Svg w={10} h={10} stroke="none" fill="currentColor"><path d="M5 0l5 5H0zM5 5l5 5H0z" /></Svg>
                        </SlideJump>
                        <SlideJump aria-label="下一张幻灯片">
                            <Svg w={10} h={10} stroke="none" fill="currentColor"><path d="M0 0h10L5 5zM0 5h10l-5 5z" /></Svg>
                        </SlideJump>
                    </ScrollColumn>
                </StageInner>
            </Stage>
        </Workspace>

        <StatusBar>
            <StatusText>幻灯片 第 9 张，共 9 张</StatusText>
            <StatusButton $left={24} aria-label="拼写检查"><SpellIcon /></StatusButton>
            <StatusButton $left={21}>中文(中国)</StatusButton>
            <StatusRight>
                <StatusButton $gap={6}><NotesIcon />备注</StatusButton>
                <StatusButton $left={21} $gap={1}><DisplaySettingsIcon />显示器设置</StatusButton>
                <StatusButton $left={25} $gap={3}><CommentIcon />批注</StatusButton>
                <ViewButtons>
                    <ViewButton $active aria-label="普通视图"><NormalViewIcon /></ViewButton>
                    <ViewButton aria-label="幻灯片浏览"><SorterIcon /></ViewButton>
                    <ViewButton aria-label="阅读视图"><ReadingIcon /></ViewButton>
                    <ViewButton aria-label="幻灯片放映"><SlideShowIcon /></ViewButton>
                </ViewButtons>
                <PlainButton $left={7} aria-label="缩小">
                    <Svg w={10} h={10} color="#444"><path d="M0 4.500h10" /></Svg>
                </PlainButton>
                <ZoomRange type="range" min="0" max="100" defaultValue="25" aria-label="缩放" />
                <PlainButton aria-label="放大">
                    <Svg w={10} h={10} color="#444"><path d="M0 4.500h10M5 0v10" /></Svg>
                </PlainButton>
                <ZoomValue>55%</ZoomValue>
                <PlainButton $left={14} aria-label="适应窗口"><FitIcon /></PlainButton>
            </StatusRight>
        </StatusBar>
    </Window>
);

export default App;
